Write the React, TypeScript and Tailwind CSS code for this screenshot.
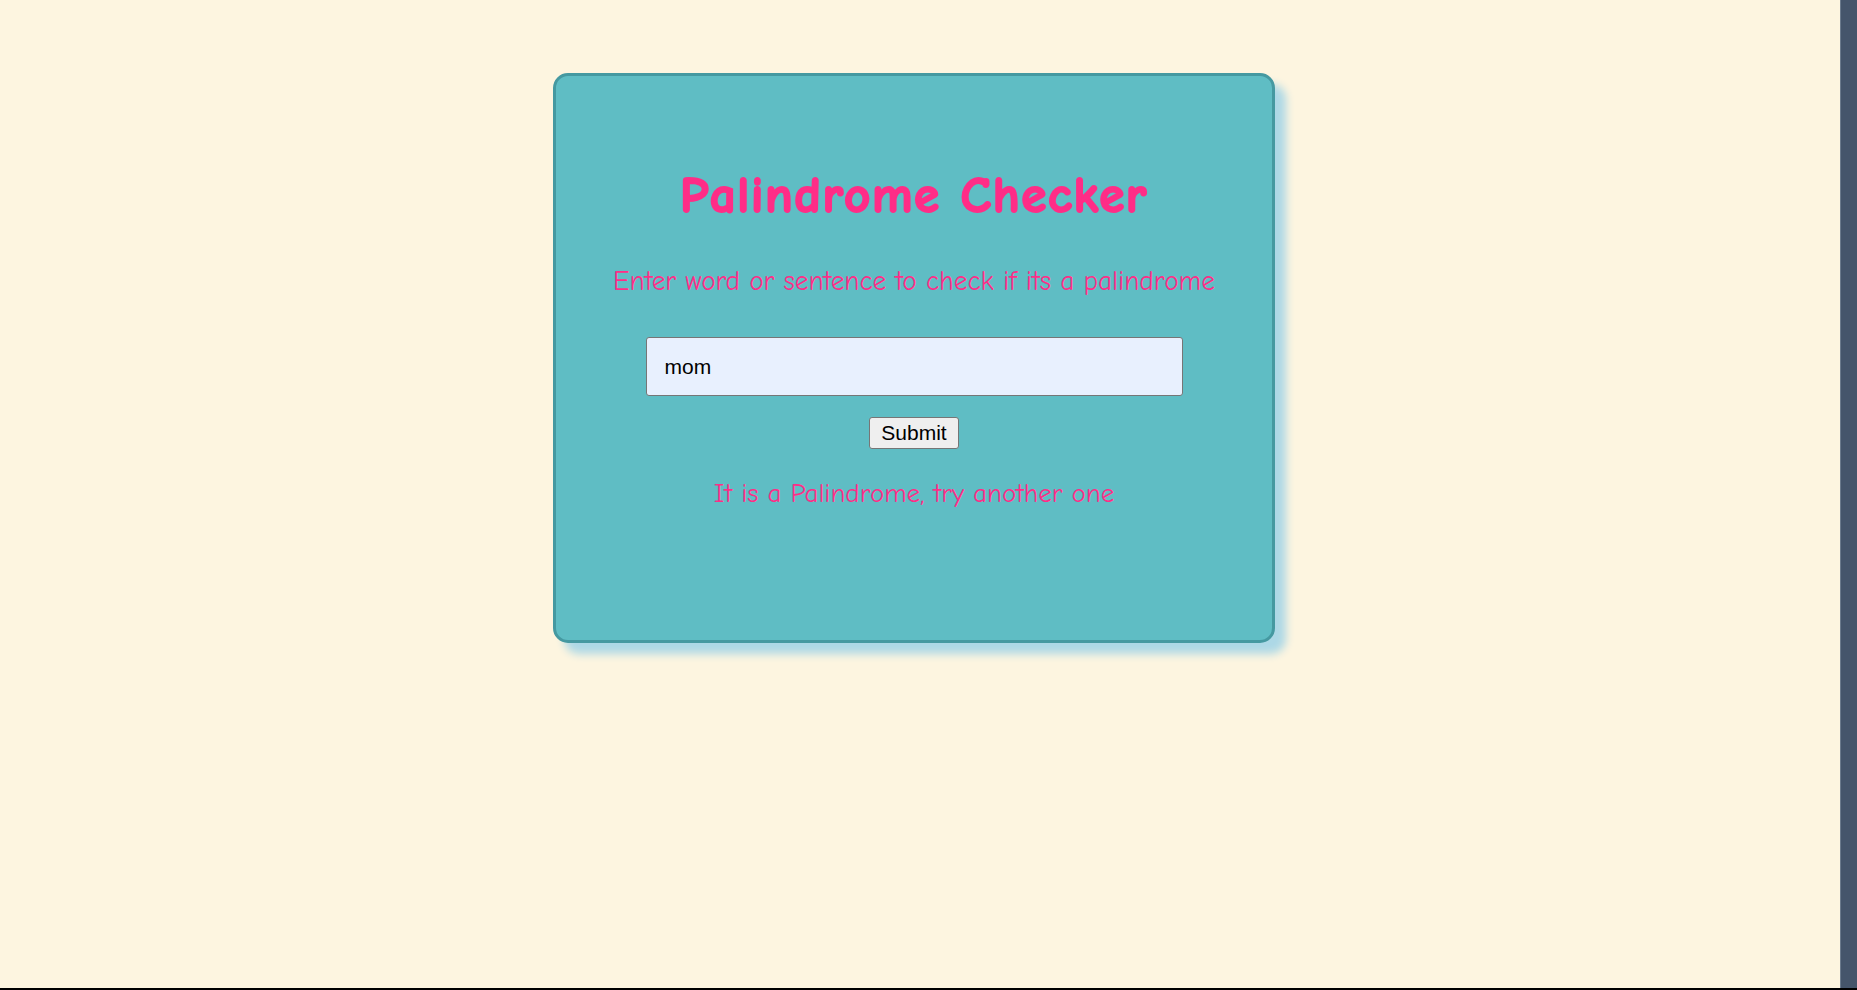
import React from "react";

const comic = { fontFamily: '"Comic Sans MS", "Comic Neue", "Noto Sans", sans-serif' };
const arial = { fontFamily: '"Liberation Sans", Arial, sans-serif' };

export default function App() {
  return (
    <div className="flex flex-col w-full h-[990px] overflow-hidden">
      <div className="flex flex-1 min-h-0">
        <div className="flex-1 bg-[#fdf5e0] flex justify-center items-start pt-[73px] pr-[12px]">
          <div
            className="box-border w-[722px] h-[570px] bg-[#5fbdc4] border-[3px] border-[#4599a1] rounded-[15px] shadow-[11px_11px_9px_#add8e6] flex flex-col items-center pt-[92px]"
          >
            <h1
              className="text-[51px] leading-[56px] h-[56px] font-bold text-[#ff2d87] tracking-[1.6px] whitespace-nowrap [-webkit-text-stroke:2px_#ff2d87]"
              style={comic}
            >
              Palindrome Checker
            </h1>
            <p
              className="mt-[41px] text-[27.3px] leading-[32px] h-[32px] text-[#ff2d87] whitespace-nowrap"
              style={comic}
            >
              Enter word or sentence to check if its a palindrome
            </p>
            <input
              type="text"
              defaultValue="mom"
              className="mt-[40px] box-border w-[537px] h-[59px] bg-[#e8f0fe] border border-[#767676] rounded-[3px] pl-[18px] text-[21px] text-black outline-none"
              style={arial}
            />
            <button
              className="mt-[21px] box-border w-[90px] h-[32px] bg-[#efefef] border border-[#767676] rounded-[3px] text-[21px] leading-[24px] text-black flex items-center justify-center"
              style={arial}
            >
              Submit
            </button>
            <p
              className="mt-[29px] text-[27px] leading-[32px] h-[32px] text-[#ff2d87] whitespace-nowrap"
              style={comic}
            >
              It is a Palindrome, try another one
            </p>
          </div>
        </div>
        <div className="w-[17px] bg-[#45556b] border-l border-[#6b7a8c]" />
      </div>
      <div className="h-[2px] bg-black" />
    </div>
  );
}
